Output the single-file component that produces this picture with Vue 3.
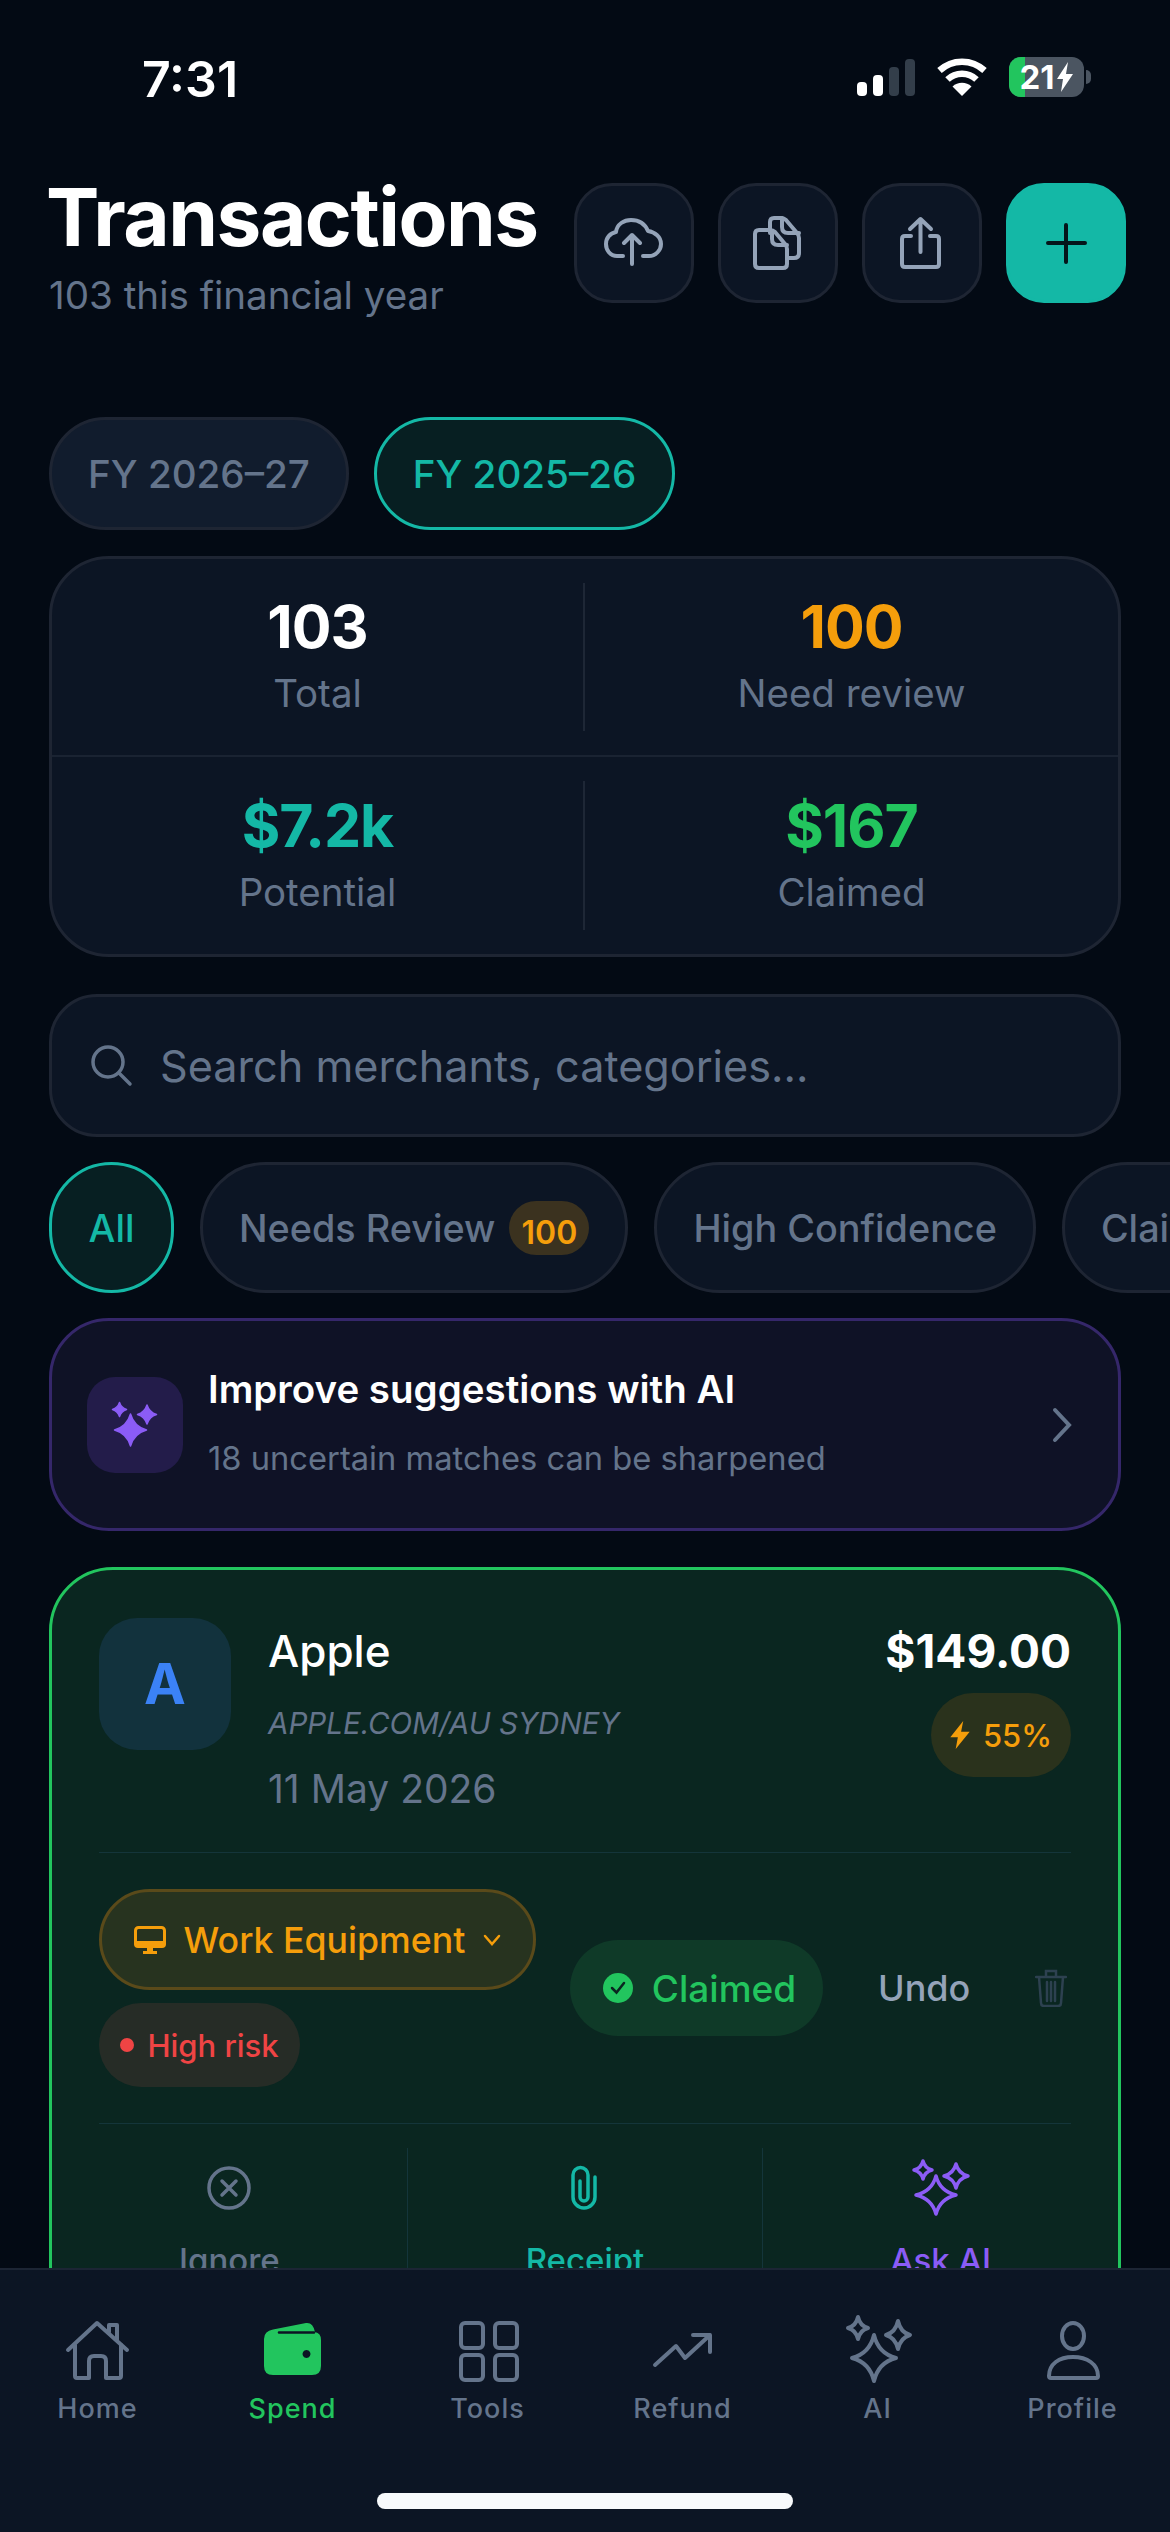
<template>
  <div class="phone">
    <div class="status">
      <span class="time">7:31</span>
      <div class="status-right">
        <div class="signal"><i class="on s1"></i><i class="on s2"></i><i class="s3"></i><i class="s4"></i></div>
        <svg class="wifi" width="50" height="38" viewBox="0 0 50 38">
          <path d="M25 38 15.500 28.500a14 14 0 0 1 19 0z" fill="#fff" />
          <path d="M10.500 21.500a21 21 0 0 1 29 0" fill="none" stroke="#fff" stroke-width="6.500" />
          <path d="M2.500 12.500a33 33 0 0 1 45 0" fill="none" stroke="#fff" stroke-width="6.500" />
        </svg>
        <div class="battery">
          <div class="battery-fill"></div>
          <span class="battery-text">21</span>
          <svg class="battery-bolt" width="18" height="30" viewBox="0 0 18 30"><path d="M12 0 1 17h6l-2 13L17 12h-7z" fill="#fff" /></svg>
          <i class="battery-tip"></i>
        </div>
      </div>
    </div>

    <header class="header">
      <div class="title-block">
        <h1>Transactions</h1>
        <p>103 this financial year</p>
      </div>
      <div class="head-btns">
        <button class="icon-btn">
          <svg width="60" height="60" viewBox="0 0 60 60" class="ic">
            <path d="M19 43H13C6 43 2 37 2 31 2 25 6 20 12 19 13 11 20 7 27 7 35 7 41 11 44 18 51 19 57 24 57 31 57 37 52 43 45 43H39" />
            <path d="M28 51V22M20 30l8-8 8 8" />
          </svg>
        </button>
        <button class="icon-btn">
          <svg width="60" height="60" viewBox="0 0 60 60" class="ic">
            <path d="M11 17h11q3 0 5 2l10 12q2 2 2 5v15q0 4-4 4H11q-4 0-4-4V21q0-4 4-4z" />
            <path d="M24 18v8q0 6 6 6h9" />
            <path d="M22 20V9q0-4 4-4h7q3 0 5 2l11 13q2 2 2 5v15q0 5-5 5h-6" />
            <path d="M34 5v9q0 6 6 6h11" />
          </svg>
        </button>
        <button class="icon-btn">
          <svg width="60" height="60" viewBox="0 0 60 60" class="ic">
            <path d="M19 23h-6q-3 0-3 3v25q0 3 3 3h31q3 0 3-3V26q0-3-3-3h-6" />
            <path d="M28.500 39V6M18 16 28.500 6 39 16" />
          </svg>
        </button>
        <button class="icon-btn add">
          <svg width="60" height="60" viewBox="0 0 60 60"><path d="M30 12v37M12 30h37" fill="none" stroke="#04151a" stroke-width="4" stroke-linecap="round" /></svg>
        </button>
      </div>
    </header>

    <div class="fy-row">
      <div class="fy">FY 2026–27</div>
      <div class="fy active">FY 2025–26</div>
    </div>

    <section class="stats">
      <div v-for="s in stats" :key="s.label" class="stat">
        <div class="stat-inner">
          <b :style="{ color: s.color }">{{ s.value }}</b>
          <span>{{ s.label }}</span>
        </div>
      </div>
    </section>

    <div class="search">
      <svg width="44" height="44" viewBox="0 0 44 44" fill="none" stroke="#64748b" stroke-width="3.500" stroke-linecap="round">
        <circle cx="18" cy="18" r="15" /><path d="m29 29 11 11" />
      </svg>
      <span>Search merchants, categories...</span>
    </div>

    <div class="chips">
      <div class="chip active">All</div>
      <div class="chip">Needs Review <em>100</em></div>
      <div class="chip">High Confidence</div>
      <div class="chip">Claimed</div>
    </div>

    <div class="banner">
      <div class="banner-icon">
        <svg width="96" height="96" viewBox="0 0 96 96" fill="#8b5cf6" stroke="#8b5cf6" stroke-width="1.500" stroke-linejoin="round">
          <path :d="star(43.500, 53, 16, 16, 0.22)" />
          <path :d="star(32.500, 32.500, 7, 7, 0.24)" />
          <path :d="star(60, 37.500, 9.500, 9.500, 0.24)" />
        </svg>
      </div>
      <div class="banner-text">
        <strong>Improve suggestions with AI</strong>
        <span>18 uncertain matches can be sharpened</span>
      </div>
      <svg class="chev" width="24" height="36" viewBox="0 0 24 36" fill="none" stroke="#64748b" stroke-width="4" stroke-linecap="round"><path d="m5 3 14 15L5 33" /></svg>
    </div>

    <article class="card">
      <div class="card-body">
        <div class="card-top">
          <div class="avatar">A</div>
          <div class="info">
            <div class="name">Apple</div>
            <div class="raw">APPLE.COM/AU SYDNEY</div>
            <div class="date">11 May 2026</div>
          </div>
          <div class="amount-col">
            <div class="amount">$149.00</div>
            <div class="conf">
              <svg width="20" height="28" viewBox="0 0 18 26"><path d="M12 0 0 15h7l-2 11L18 10h-8z" fill="#f59e0b" /></svg>
              55%
            </div>
          </div>
        </div>
        <div class="card-mid">
          <div class="tags">
            <div class="cat">
              <svg width="32" height="28" viewBox="0 0 32 28"><rect x="1.500" y="1.500" width="29" height="18" rx="3" fill="none" stroke="#f59e0b" stroke-width="3" /><path d="M0 15h32v3a4 4 0 0 1-4 4H4a4 4 0 0 1-4-4z" fill="#f59e0b" /><path d="M13 22h6v3h4v3H9v-3h4z" fill="#f59e0b" /></svg>
              <span>Work Equipment</span>
              <svg width="18" height="12" viewBox="0 0 18 12" fill="none" stroke="#f59e0b" stroke-width="2.500" stroke-linecap="round"><path d="m2 2 7 8 7-8" /></svg>
            </div>
            <div class="risk"><i></i>High risk</div>
          </div>
          <div class="claimed">
            <svg width="30" height="30" viewBox="0 0 30 30"><circle cx="15" cy="15" r="15" fill="#22c55e" /><path d="m9 15 4.500 4.500L21 10" fill="none" stroke="#0a2620" stroke-width="2.500" stroke-linecap="round" /></svg>
            Claimed
          </div>
          <div class="undo">Undo</div>
          <svg class="trash" width="32" height="38" viewBox="0 0 32 38" fill="none" stroke="#2d4150" stroke-width="2.500" stroke-linecap="round">
            <path d="M1 8h30M11 7V2h10v5M4 8l2 26q0 3 3 3h14q3 0 3-3l2-26M12 13v19M16 13v19M20 13v19" />
          </svg>
        </div>
      </div>
      <div class="actions">
        <div class="action" style="color: #64748b">
          <svg width="80" height="64" viewBox="0 0 80 64" fill="none" stroke="#64748b" stroke-width="3.500" stroke-linecap="round"><circle cx="40" cy="32" r="20" /><path d="m33 25 14 14M47 25 33 39" /></svg>
          <span>Ignore</span>
        </div>
        <div class="action" style="color: #14b8a6">
          <svg width="80" height="64" viewBox="0 0 80 64" fill="none" stroke="#14b8a6" stroke-width="3.500" stroke-linecap="round"><path d="M50 21v20a11 11 0 0 1-22 0V19a7.500 7.500 0 0 1 15 0v22a4 4 0 0 1-8 0V25" /></svg>
          <span>Receipt</span>
        </div>
        <div class="action" style="color: #8b5cf6">
          <svg width="80" height="64" viewBox="0 0 80 64" fill="none" stroke="#8b5cf6" stroke-width="3.500" stroke-linejoin="round">
            <path :d="star(35, 39, 20, 19, 0.2)" />
            <path :d="star(22, 14, 9, 9, 0.2)" />
            <path :d="star(55, 20, 12, 12, 0.2)" />
          </svg>
          <span>Ask AI</span>
        </div>
      </div>
    </article>

    <nav class="nav">
      <div v-for="n in navItems" :key="n" class="nav-item" :class="{ on: n === 'Spend' }">
        <svg v-if="n === 'Home'" width="96" height="72" viewBox="0 0 96 72" class="ni">
          <path d="M18 36 47 9l30 27" />
          <path d="M25 31v31q0 2 2 2h12V47q0-5 5-5h7q5 0 5 5v17h13q2 0 2-2V31" />
          <path d="M59 18v-7h8v15" />
        </svg>
        <svg v-else-if="n === 'Spend'" width="96" height="72" viewBox="0 0 96 72">
          <path d="M19 25q0-8 9-9.500L61 9q7-1 9 9 6 1 6 8v26q0 9-9 9H28q-9 0-9-9zM61.500 36a4 4 0 1 0 .01 0z" fill="#22c55e" fill-rule="evenodd" />
          <path d="M34 18.500h35" stroke="#0c1524" stroke-width="2.500" stroke-linecap="round" />
        </svg>
        <svg v-else-if="n === 'Tools'" width="96" height="72" viewBox="0 0 96 72" class="ni">
          <rect x="21" y="9" width="22" height="25" rx="4" /><rect x="55" y="9" width="22" height="25" rx="4" />
          <rect x="21" y="41" width="22" height="25" rx="4" /><rect x="55" y="41" width="22" height="25" rx="4" />
        </svg>
        <svg v-else-if="n === 'Refund'" width="96" height="72" viewBox="0 0 96 72" class="ni">
          <path d="M20 51 41 32l9 12 25-23M58 21h17v17" />
        </svg>
        <svg v-else-if="n === 'AI'" width="96" height="72" viewBox="0 0 96 72" class="ni">
          <path :d="star(44, 44, 22, 23, 0.2)" />
          <path :d="star(28, 14, 10, 11, 0.2)" />
          <path :d="star(68, 21, 12, 14, 0.2)" />
        </svg>
        <svg v-else width="96" height="72" viewBox="0 0 96 72" class="ni">
          <ellipse cx="48" cy="22" rx="11" ry="13" />
          <path d="M24 62c0-12 10-19 24-19s25 7 25 19q0 2-2 2H26q-2 0-2-2z" />
        </svg>
        <span>{{ n }}</span>
      </div>
      <div class="home-bar"></div>
    </nav>
  </div>
</template>

<script setup>
const stats = [
  { value: '103', label: 'Total', color: '#ffffff' },
  { value: '100', label: 'Need review', color: '#f59e0b' },
  { value: '$7.2k', label: 'Potential', color: '#14b8a6' },
  { value: '$167', label: 'Claimed', color: '#22c55e' }
]

const navItems = ['Home', 'Spend', 'Tools', 'Refund', 'AI', 'Profile']

// four point star, k sets how far the sides pull in
const star = (cx, cy, rx, ry, k = 0.16) => {
  const kx = rx * k
  const ky = ry * k
  return `M${cx} ${cy - ry}Q${cx + kx} ${cy - ky} ${cx + rx} ${cy}Q${cx + kx} ${cy + ky} ${cx} ${cy + ry}Q${cx - kx} ${cy + ky} ${cx - rx} ${cy}Q${cx - kx} ${cy - ky} ${cx} ${cy - ry}z`
}
</script>

<style>
html,
body {
  margin: 0;
  background: #030a14;
}
</style>

<style scoped>
.phone {
  position: relative;
  width: 1170px;
  height: 2532px;
  overflow: hidden;
  background: #030a14;
  font-family: Inter, "Liberation Sans", sans-serif;
  color: #fff;
}

/* status bar */
.status {
  height: 183px;
  box-sizing: border-box;
  padding: 53px 86px 0 142px;
  display: flex;
  justify-content: space-between;
  align-items: flex-start;
}
.time {
  font-size: 50px;
  line-height: 52px;
  font-weight: 600;
}
.status-right {
  display: flex;
  align-items: center;
  gap: 22px;
  margin-top: 4px;
}
.signal {
  display: flex;
  align-items: flex-end;
  gap: 6px;
  height: 37px;
}
.signal i {
  width: 10px;
  border-radius: 4px;
  background: #333e4a;
}
.signal .on { background: #fff; }
.signal .s1 { height: 14px; }
.signal .s2 { height: 21px; }
.signal .s3 { height: 29px; }
.signal .s4 { height: 37px; }
.battery {
  position: relative;
  width: 75px;
  height: 40px;
  border-radius: 12px;
  background: #4b5561;
  display: flex;
  align-items: center;
  justify-content: center;
  gap: 1px;
}
.battery-fill {
  position: absolute;
  left: 0;
  top: 0;
  bottom: 0;
  width: 16px;
  background: #22c55e;
  border-radius: 12px 0 0 12px;
}
.battery-text {
  position: relative;
  font-size: 33px;
  font-weight: 700;
  line-height: 40px;
}
.battery-bolt { position: relative; }
.battery-tip {
  position: absolute;
  left: 77px;
  top: 13px;
  width: 5px;
  height: 14px;
  border-radius: 0 5px 5px 0;
  background: #4b5561;
}

/* header */
.header {
  height: 120px;
  margin-bottom: 114px;
  padding: 0 44px 0 49px;
  display: flex;
  justify-content: space-between;
  align-items: flex-start;
}
.title-block { margin-top: -10px; }
.title-block h1 {
  margin: 0 0 0 -3px;
  font-size: 80px;
  line-height: 88px;
  font-weight: 700;
  letter-spacing: -1.500px;
}
.title-block p {
  margin: 10px 0 0;
  font-size: 38.600px;
  line-height: 48px;
  color: #64748b;
}
.head-btns {
  display: flex;
  gap: 24px;
}
.icon-btn {
  width: 120px;
  height: 120px;
  padding: 0;
  box-sizing: border-box;
  border: 3px solid #1e2533;
  border-radius: 38px;
  background: #0c1524;
  display: flex;
  align-items: center;
  justify-content: center;
}
.icon-btn.add {
  background: #14b8a6;
  border-color: #14b8a6;
}
.ic {
  fill: none;
  stroke: #94a3b8;
  stroke-width: 4;
  stroke-linecap: round;
  stroke-linejoin: round;
}

/* financial years */
.fy-row {
  display: flex;
  gap: 25px;
  padding: 0 49px;
  margin-bottom: 26px;
}
.fy {
  height: 113px;
  padding: 0 36px;
  box-sizing: border-box;
  display: flex;
  align-items: center;
  border: 3px solid #1e2533;
  border-radius: 57px;
  background: #111c2d;
  color: #64748b;
  font-size: 38.600px;
  font-weight: 500;
}
.fy.active {
  border-color: #14b8a6;
  background: #071f22;
  color: #14b8a6;
}

/* stat grid */
.stats {
  margin: 0 49px 37px;
  height: 401px;
  box-sizing: border-box;
  border: 3px solid #1e2533;
  border-radius: 60px;
  background: #0c1524;
  display: grid;
  grid-template-columns: 1fr 1fr;
  grid-template-rows: 1fr 1fr;
}
.stat {
  padding: 24px 0;
  display: flex;
}
.stat:nth-child(-n + 2) { border-bottom: 2px solid #1a2332; }
.stat-inner {
  flex: 1;
  display: flex;
  flex-direction: column;
  align-items: center;
  justify-content: center;
  padding-bottom: 6px;
}
.stat:nth-child(odd) .stat-inner { border-right: 2px solid #1e2736; }
.stat b {
  font-size: 59px;
  line-height: 70px;
  font-weight: 700;
  letter-spacing: -1px;
}
.stat span {
  margin-top: 9px;
  font-size: 38.500px;
  line-height: 44px;
  color: #64748b;
}

/* search */
.search {
  margin: 0 49px 25px;
  height: 143px;
  box-sizing: border-box;
  padding: 0 38px;
  border: 3px solid #1e2533;
  border-radius: 48px;
  background: #0c1524;
  display: flex;
  align-items: center;
  gap: 26px;
  color: #64748b;
  font-size: 43.200px;
}

/* filter chips */
.chips {
  display: flex;
  gap: 26px;
  padding-left: 49px;
  margin-bottom: 25px;
  white-space: nowrap;
}
.chip {
  flex: none;
  height: 131px;
  padding: 0 36px;
  box-sizing: border-box;
  display: flex;
  align-items: center;
  border: 3px solid #1e2533;
  border-radius: 66px;
  background: #0c1524;
  color: #64748b;
  font-size: 37.800px;
  font-weight: 500;
}
.chip.active {
  width: 125px;
  padding: 0;
  justify-content: center;
  border-color: #14b8a6;
  background: #071f22;
  color: #14b8a6;
}
.chip em {
  width: 80px;
  height: 54px;
  margin-left: 14px;
  border-radius: 27px;
  background: #3b321f;
  color: #f59e0b;
  font-style: normal;
  font-size: 32px;
  font-weight: 600;
  display: flex;
  align-items: flex-end;
  justify-content: center;
  line-height: 44px;
}

/* AI banner */
.banner {
  margin: 0 49px 36px;
  height: 213px;
  box-sizing: border-box;
  padding: 0 44px 0 35px;
  border: 3px solid #35276a;
  border-radius: 60px;
  background: #0f1226;
  display: flex;
  align-items: center;
}
.banner-icon {
  width: 96px;
  height: 96px;
  border-radius: 28px;
  background: #231c4a;
}
.banner-text {
  flex: 1;
  margin-left: 25px;
  display: flex;
  flex-direction: column;
  gap: 24px;
  margin-top: -6px;
}
.banner-text strong {
  font-size: 38.500px;
  line-height: 48px;
  font-weight: 600;
}
.banner-text span {
  font-size: 32.700px;
  line-height: 42px;
  color: #64748b;
}

/* transaction card */
.card {
  margin: 0 49px;
  height: 900px;
  box-sizing: border-box;
  border: 3px solid #22c55e;
  border-radius: 64px;
  background: #0a2620;
}
.card-body { padding: 48px 47px 0; }
.card-top {
  display: flex;
  padding-bottom: 39px;
  border-bottom: 1px solid #14353a;
}
.avatar {
  width: 132px;
  height: 132px;
  border-radius: 38px;
  background: #12323d;
  color: #3b82f6;
  font-size: 56px;
  font-weight: 700;
  display: flex;
  align-items: center;
  justify-content: center;
}
.info {
  flex: 1;
  margin-left: 37px;
  padding-top: 6px;
}
.name {
  font-size: 44px;
  line-height: 54px;
  font-weight: 500;
}
.raw {
  margin-top: 25px;
  font-size: 29.600px;
  line-height: 40px;
  font-style: italic;
  color: #64748b;
}
.date {
  margin-top: 22px;
  font-size: 39px;
  line-height: 48px;
  color: #64748b;
}
.amount-col {
  display: flex;
  flex-direction: column;
  align-items: flex-end;
  padding-top: 4px;
}
.amount {
  font-size: 46px;
  line-height: 58px;
  font-weight: 700;
}
.conf {
  margin-top: 13px;
  width: 140px;
  height: 84px;
  border-radius: 42px;
  background: #2a321c;
  color: #f59e0b;
  font-size: 31px;
  font-weight: 500;
  display: flex;
  align-items: center;
  justify-content: center;
  gap: 13px;
}
.card-mid {
  display: flex;
  align-items: center;
  padding: 36px 0;
  border-bottom: 1px solid #14353a;
}
.tags {
  display: flex;
  flex-direction: column;
  align-items: flex-start;
  gap: 13px;
}
.cat {
  width: 437px;
  height: 101px;
  box-sizing: border-box;
  border: 3px solid #5a4a1a;
  border-radius: 51px;
  background: #27331f;
  color: #f59e0b;
  font-size: 35.700px;
  font-weight: 500;
  display: flex;
  align-items: center;
  justify-content: center;
  gap: 18px;
}
.risk {
  width: 201px;
  height: 84px;
  border-radius: 42px;
  background: #262c26;
  color: #ef4444;
  font-size: 31px;
  font-weight: 500;
  display: flex;
  align-items: center;
  justify-content: center;
  gap: 13px;
}
.risk i {
  width: 14px;
  height: 14px;
  border-radius: 50%;
  background: #ef4444;
}
.claimed {
  margin-left: 34px;
  width: 253px;
  height: 96px;
  box-sizing: border-box;
  padding-left: 6px;
  border-radius: 48px;
  background: #0f3a28;
  color: #22c55e;
  font-size: 37px;
  font-weight: 500;
  display: flex;
  align-items: center;
  justify-content: center;
  gap: 19px;
}
.undo {
  margin-left: 55px;
  color: #94a3b8;
  font-size: 36px;
  font-weight: 500;
}
.trash { margin-left: auto; margin-right: 4px; }
.actions {
  display: flex;
  margin-top: 24px;
}
.action {
  flex: 1;
  height: 200px;
  display: flex;
  flex-direction: column;
  align-items: center;
  font-size: 33px;
  font-weight: 500;
}
.action + .action { border-left: 1px solid #14353a; }
.action svg { margin-top: 8px; }
.action span {
  margin-top: 19px;
  line-height: 42px;
}

/* bottom nav */
.nav {
  position: absolute;
  left: 0;
  right: 0;
  bottom: 0;
  height: 264px;
  box-sizing: border-box;
  padding-top: 44px;
  border-top: 2px solid #1c2534;
  background: #0c1524;
  display: grid;
  grid-template-columns: repeat(6, 1fr);
  align-items: start;
}
.nav-item {
  display: flex;
  flex-direction: column;
  align-items: center;
  color: #64748b;
  font-size: 27px;
  font-weight: 500;
  letter-spacing: 1px;
}
.nav-item span {
  margin-top: 5px;
  line-height: 36px;
}
.nav-item.on { color: #22c55e; }
.ni {
  fill: none;
  stroke: #64748b;
  stroke-width: 4;
  stroke-linecap: round;
  stroke-linejoin: round;
}
.home-bar {
  position: absolute;
  left: 377px;
  top: 223px;
  width: 416px;
  height: 16px;
  border-radius: 8px;
  background: #f8fafc;
}
</style>
